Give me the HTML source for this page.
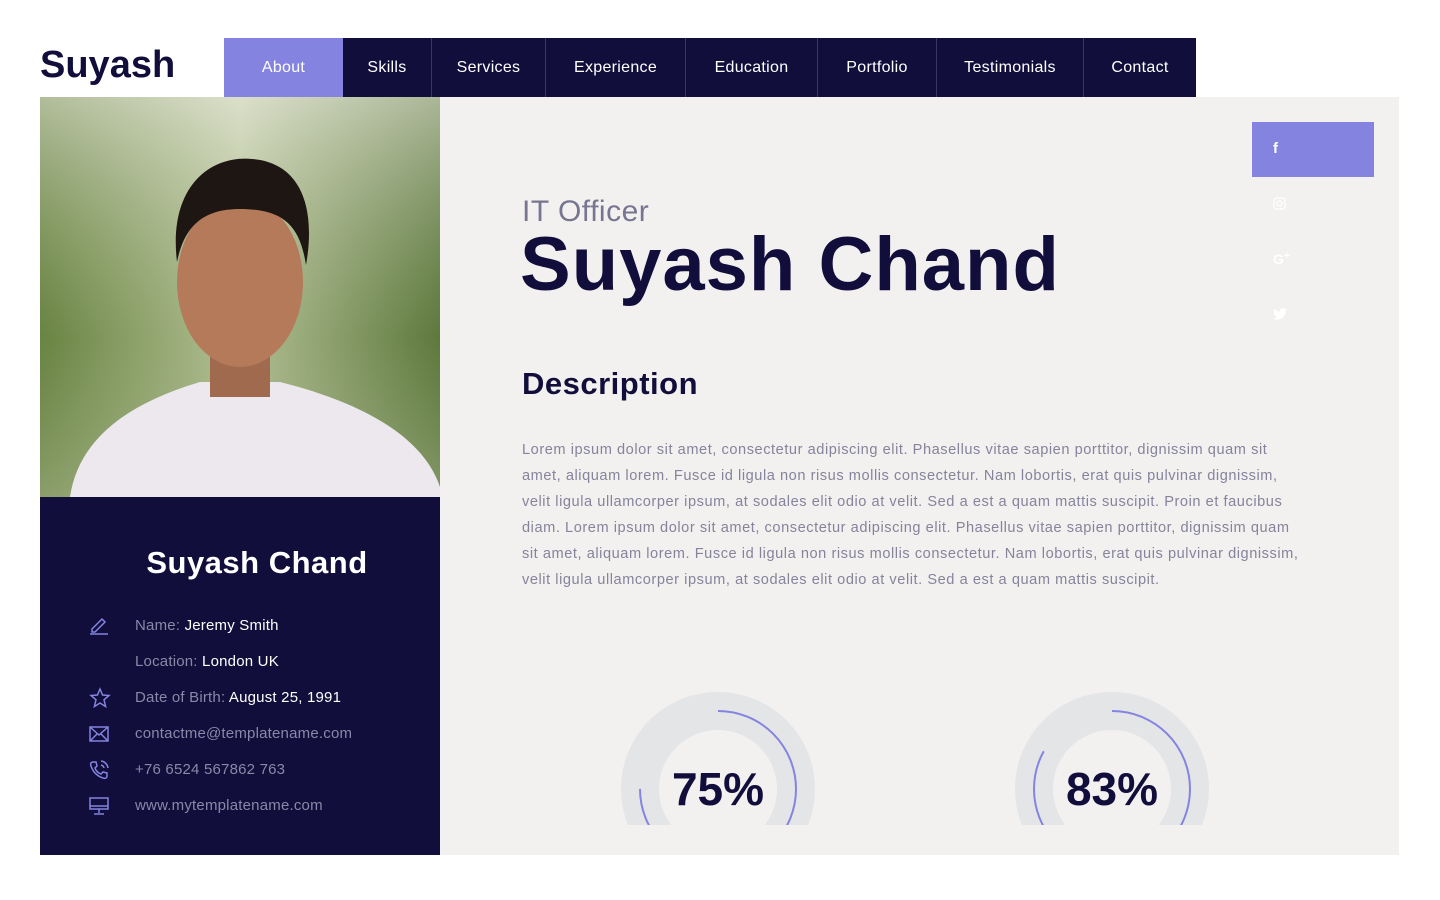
<!DOCTYPE html>
<html><head><meta charset="utf-8"><style>
*{margin:0;padding:0;box-sizing:border-box}
body{width:1440px;height:900px;background:#fff;font-family:"Liberation Sans",sans-serif;position:relative;overflow:hidden}
.logo{position:absolute;left:40px;top:44px;font-size:38px;font-weight:bold;color:#110e3b;letter-spacing:0px}
.nav{position:absolute;left:224px;top:38px;height:59px;display:flex}
.nav div{height:59px;line-height:59px;color:#fff;font-size:16px;background:#110e3b;text-align:center;border-right:1px solid #3a3766;letter-spacing:0.3px}
.nav div.a{background:#8484e0;border-right:none}
.photo{position:absolute;left:40px;top:97px;width:400px;height:400px;overflow:hidden}
.dark{position:absolute;left:40px;top:497px;width:400px;height:358px;background:#110e3b}
.main{position:absolute;left:440px;top:97px;width:959px;height:758px;background:#f3f0f0;overflow:hidden}
.info{position:absolute;left:95px;font-size:15px;color:#8a88a8;letter-spacing:0.2px}
.info b{font-weight:normal;color:#fff}
.ic{position:absolute;left:49px}
</style></head><body>
<div class="logo">Suyash</div>
<div class="nav">
<div class="a" style="width:119px">About</div>
<div style="width:89px">Skills</div>
<div style="width:114px">Services</div>
<div style="width:140px">Experience</div>
<div style="width:132px">Education</div>
<div style="width:119px">Portfolio</div>
<div style="width:147px">Testimonials</div>
<div style="width:112px;border-right:none">Contact</div>
</div>
<div class="photo">
<svg width="400" height="400">
<defs>
<linearGradient id="bg" x1="0" y1="0" x2="1" y2="0"><stop offset="0" stop-color="#5f7a3a"/><stop offset="0.5" stop-color="#c9d0b0"/><stop offset="1" stop-color="#4f6a34"/></linearGradient>
<linearGradient id="bg2" x1="0" y1="0" x2="0" y2="1"><stop offset="0" stop-color="#e8eadb" stop-opacity="0.6"/><stop offset="0.6" stop-color="#7f9a55" stop-opacity="0.3"/><stop offset="1" stop-color="#a6b58a" stop-opacity="0.6"/></linearGradient>
</defs>
<rect width="400" height="400" fill="url(#bg)"/>
<rect width="400" height="400" fill="url(#bg2)"/>
<path d="M30 400 C40 330 110 300 160 285 L240 285 C300 300 380 330 400 390 L400 400Z" fill="#ece8ee"/>
<rect x="170" y="240" width="60" height="60" fill="#a06a4e"/>
<ellipse cx="200" cy="185" rx="63" ry="85" fill="#b47a5a"/>
<path d="M137 165 C128 90 170 58 212 62 C262 66 276 112 266 168 C260 130 245 112 200 112 C160 112 144 132 137 165Z" fill="#1e1612"/>
</svg>
</div>
<div class="dark">
<div style="position:absolute;left:0;width:434px;text-align:center;top:48px;color:#fff;font-size:31px;font-weight:bold;letter-spacing:0.5px">Suyash Chand</div>
<svg class="ic" style="top:118px" width="20" height="20" fill="none" stroke="#8484e0" stroke-width="1.5"><path d="M3 14 L13 4 L16 7 L6 17 H3Z"/><path d="M1 19 H19"/></svg>
<div class="info" style="top:120px">Name: <b>Jeremy Smith</b></div>
<div class="info" style="top:156px">Location: <b>London UK</b></div>
<svg class="ic" style="top:190px" width="22" height="22" fill="none" stroke="#8484e0" stroke-width="1.5"><path d="M11 2 L13.6 8 L20 8.5 L15 12.8 L16.6 19.5 L11 16 L5.4 19.5 L7 12.8 L2 8.5 L8.4 8Z"/></svg>
<div class="info" style="top:192px">Date of Birth: <b>August 25, 1991</b></div>
<svg class="ic" style="top:229px" width="20" height="16" fill="none" stroke="#8484e0" stroke-width="1.5"><rect x="1" y="1" width="18" height="14"/><path d="M1 1 L10 9 L19 1 M1 15 L8 8 M19 15 L12 8"/></svg>
<div class="info" style="top:228px">contactme@templatename.com</div>
<svg class="ic" style="top:263px" width="20" height="20" fill="none" stroke="#8484e0" stroke-width="1.5"><path d="M4 2 L7 2 L8 6 L6 8 C7 11 9 13 12 14 L14 12 L18 13 L18 16 C18 18 16 19 14 18 C8 16 4 12 2 6 C1 4 2 2 4 2Z"/><path d="M12 5 A4 4 0 0 1 15 8 M12 1 A8 8 0 0 1 19 8"/></svg>
<div class="info" style="top:264px">+76 6524 567862 763</div>
<svg class="ic" style="top:300px" width="20" height="18" fill="none" stroke="#8484e0" stroke-width="1.5"><rect x="1" y="1" width="18" height="11"/><path d="M1 9 H19 M10 12 V16 M5 17 H15"/></svg>
<div class="info" style="top:300px">www.mytemplatename.com</div>
</div>
<div class="main">
<div style="position:absolute;left:812px;top:25px;width:122px;height:55px;background:#8484e0"></div>
<div style="position:absolute;left:833px;top:43px;color:#fff;font-size:15px;font-weight:bold">f</div>
<svg style="position:absolute;left:833px;top:100px" width="13" height="13" fill="none" stroke="#fff" stroke-width="1.3"><rect x="1" y="1" width="11" height="11" rx="3"/><circle cx="6.5" cy="6.5" r="2.5"/></svg>
<div style="position:absolute;left:833px;top:154px;color:#fff;font-size:14px;font-weight:bold">G<span style="font-size:10px;vertical-align:top">+</span></div>
<svg style="position:absolute;left:833px;top:211px" width="14" height="12" viewBox="0 0 24 20" fill="#fff"><path d="M24 2.4a10 10 0 0 1-2.8.8 5 5 0 0 0 2.2-2.7 10 10 0 0 1-3.1 1.2 4.9 4.9 0 0 0-8.4 4.5A14 14 0 0 1 1.7 1a4.9 4.9 0 0 0 1.5 6.6 5 5 0 0 1-2.2-.6 4.9 4.9 0 0 0 3.9 4.9 5 5 0 0 1-2.2.1 4.9 4.9 0 0 0 4.6 3.4A9.9 9.9 0 0 1 0 17.4 14 14 0 0 0 7.5 19.6c9 0 14-7.5 14-14v-.6A10 10 0 0 0 24 2.4z"/></svg>
<div style="position:absolute;left:82px;top:98px;font-size:30px;color:#777690;letter-spacing:0.5px">IT Officer</div>
<div style="position:absolute;left:80px;top:124px;font-size:76px;font-weight:bold;color:#110e3b;letter-spacing:1px">Suyash Chand</div>
<div style="position:absolute;left:82px;top:269px;font-size:31px;font-weight:bold;color:#110e3b;letter-spacing:0.5px">Description</div>
<div style="position:absolute;left:82px;top:340px;width:785px;font-size:14.6px;line-height:26px;color:#85849a;letter-spacing:0.55px">Lorem ipsum dolor sit amet, consectetur adipiscing elit. Phasellus vitae sapien porttitor, dignissim quam sit amet, aliquam lorem. Fusce id ligula non risus mollis consectetur. Nam lobortis, erat quis pulvinar dignissim, velit ligula ullamcorper ipsum, at sodales elit odio at velit. Sed a est a quam mattis suscipit. Proin et faucibus diam. Lorem ipsum dolor sit amet, consectetur adipiscing elit. Phasellus vitae sapien porttitor, dignissim quam sit amet, aliquam lorem. Fusce id ligula non risus mollis consectetur. Nam lobortis, erat quis pulvinar dignissim, velit ligula ullamcorper ipsum, at sodales elit odio at velit. Sed a est a quam mattis suscipit.</div>
<svg style="position:absolute;left:0;top:580px" width="959" height="148">
<g transform="translate(278,112)">
<circle r="78" fill="none" stroke="#e4e5e7" stroke-width="38"/>
<circle r="78" fill="none" stroke="#8484e0" stroke-width="2" stroke-dasharray="367.6 1000" transform="rotate(-90)"/>
<text x="0" y="16" text-anchor="middle" font-family="Liberation Sans" font-weight="bold" font-size="46" fill="#110e3b">75%</text>
</g>
<g transform="translate(672,112)">
<circle r="78" fill="none" stroke="#e4e5e7" stroke-width="38"/>
<circle r="78" fill="none" stroke="#8484e0" stroke-width="2" stroke-dasharray="406.8 1000" transform="rotate(-90)"/>
<text x="0" y="16" text-anchor="middle" font-family="Liberation Sans" font-weight="bold" font-size="46" fill="#110e3b">83%</text>
</g>
</svg>
</div>
</body></html>
